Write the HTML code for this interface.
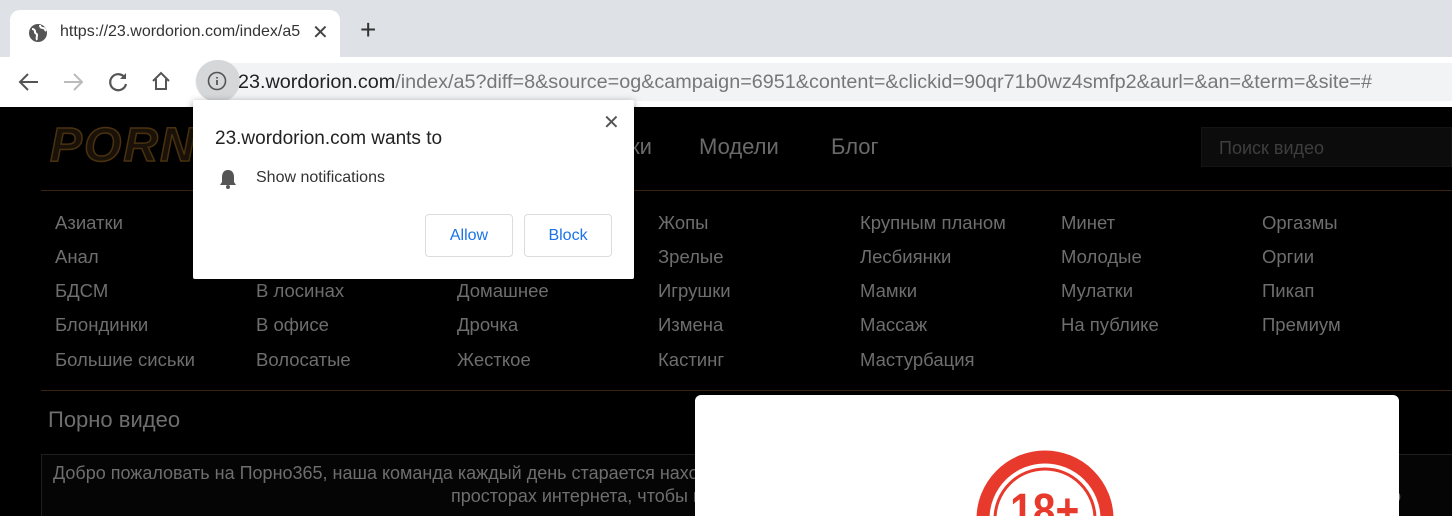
<!DOCTYPE html>
<html><head><meta charset="utf-8"><style>
*{margin:0;padding:0;box-sizing:border-box}
html,body{width:1452px;height:516px;overflow:hidden}
body{position:relative;font-family:"Liberation Sans",sans-serif;background:#000}
.tabbar{position:absolute;left:0;top:0;width:1452px;height:57px;background:#dee1e6}
.tab{position:absolute;left:10px;top:10px;width:330px;height:47px;background:#fff;border-radius:10px 10px 0 0}
.tab .t{position:absolute;left:50px;top:13px;font-size:16px;color:#333;white-space:nowrap;width:240px;overflow:hidden}
.toolbar{position:absolute;left:0;top:57px;width:1452px;height:50px;background:#fff}
.omni{position:absolute;left:195px;top:6px;width:1257px;height:38px;background:#f1f3f4;border-radius:19px 0 0 19px}
.url{position:absolute;left:238px;top:71px;font-size:19.8px;color:#777;white-space:nowrap}
.url b{font-weight:normal;color:#222}
.page{position:absolute;left:0;top:107px;width:1452px;height:409px;background:#000}
.cat{position:absolute;font-size:18.5px;color:#6e6e6e;white-space:nowrap}
.nav{position:absolute;font-size:22px;color:#6a6a6a;top:134px}
.line{position:absolute;left:41px;width:1411px;height:1px;background:#3a2414}
.popup{position:absolute;left:193px;top:100px;width:441px;height:179px;background:#fff;box-shadow:0 2px 8px rgba(0,0,0,.4);border-radius:2px}
.btn{position:absolute;top:114px;height:43px;border:1px solid #dadce0;border-radius:4px;color:#1a73e8;font-size:16px;text-align:center;line-height:41px}
</style></head><body>
<div class="tabbar">
 <div class="tab">
  <svg style="position:absolute;left:18px;top:13px" width="20" height="20" viewBox="0 0 20 20"><circle cx="10" cy="10" r="9" fill="#555"/><path d="M4 6c2 0 3 1 3 3s2 1 2 3-1 3 0 5M12 2c0 2 1 3 3 3s2 2 3 3" stroke="#fff" stroke-width="2" fill="none"/></svg>
  <div class="t">https://23.wordorion.com/index/a5</div>
  <div style="position:absolute;left:302px;top:10px;font-size:20px;color:#444">✕</div>
 </div>
 <div style="position:absolute;left:360px;top:14px;font-size:28px;color:#333">+</div>
</div>
<div class="toolbar">
 <svg style="position:absolute;left:18px;top:14px" width="22" height="22" viewBox="0 0 22 22"><path d="M20 11H3M10 3l-8 8 8 8" stroke="#555" stroke-width="2" fill="none"/></svg>
 <svg style="position:absolute;left:62px;top:14px" width="22" height="22" viewBox="0 0 22 22"><path d="M2 11h17M12 3l8 8-8 8" stroke="#bbb" stroke-width="2" fill="none"/></svg>
 <svg style="position:absolute;left:107px;top:14px" width="22" height="22" viewBox="0 0 22 22"><path d="M18 7a8 8 0 1 0 1 6" stroke="#555" stroke-width="2.2" fill="none"/><path d="M19 2v6h-6z" fill="#555"/></svg>
 <svg style="position:absolute;left:150px;top:13px" width="22" height="22" viewBox="0 0 22 22"><path d="M3 11L11 3l8 8M6 9v10h10V9" stroke="#555" stroke-width="2" fill="none"/></svg>
 <div class="omni"></div>
 <div style="position:absolute;left:196px;top:3px;width:44px;height:42px;border-radius:21px;background:#d6d7d9"></div>
 <svg style="position:absolute;left:207px;top:14px" width="20" height="20" viewBox="0 0 20 20"><circle cx="10" cy="10" r="8.5" stroke="#555" stroke-width="1.6" fill="none"/><path d="M10 9v5M10 6v1.5" stroke="#555" stroke-width="1.8"/></svg>
</div>
<div class="url"><b>23.wordorion.com</b>/index/a5?diff=8&amp;source=og&amp;campaign=6951&amp;content=&amp;clickid=90qr71b0wz4smfp2&amp;aurl=&amp;an=&amp;term=&amp;site=#</div>
<div class="page"></div>
<div style="position:absolute;left:50px;top:118px;font-size:48px;font-style:italic;font-weight:bold;color:#1a1208;-webkit-text-stroke:1.5px #4a3210;letter-spacing:2px">PORNO</div>
<div class="nav" style="left:630px">ки</div>
<div class="nav" style="left:699px">Модели</div>
<div class="nav" style="left:831px">Блог</div>
<div style="position:absolute;left:1201px;top:127px;width:251px;height:40px;background:#0c0c0c;border:1px solid #141414"><span style="position:absolute;left:17px;top:10px;font-size:18px;color:#3e3e3e">Поиск видео</span></div>
<div class="line" style="top:190px"></div>
<div class="line" style="top:390px"></div>
<div class="cat" style="left:55px;top:212px">Азиатки</div><div class="cat" style="left:55px;top:246px">Анал</div><div class="cat" style="left:55px;top:280px">БДСМ</div><div class="cat" style="left:55px;top:314px">Блондинки</div><div class="cat" style="left:55px;top:349px">Большие сиськи</div>
<div class="cat" style="left:256px;top:212px">Бразильское</div><div class="cat" style="left:256px;top:246px">Брюнетки</div><div class="cat" style="left:256px;top:280px">В лосинах</div><div class="cat" style="left:256px;top:314px">В офисе</div><div class="cat" style="left:256px;top:349px">Волосатые</div>
<div class="cat" style="left:457px;top:212px">Групповое</div><div class="cat" style="left:457px;top:246px">Девушки</div><div class="cat" style="left:457px;top:280px">Домашнее</div><div class="cat" style="left:457px;top:314px">Дрочка</div><div class="cat" style="left:457px;top:349px">Жесткое</div>
<div class="cat" style="left:658px;top:212px">Жопы</div><div class="cat" style="left:658px;top:246px">Зрелые</div><div class="cat" style="left:658px;top:280px">Игрушки</div><div class="cat" style="left:658px;top:314px">Измена</div><div class="cat" style="left:658px;top:349px">Кастинг</div>
<div class="cat" style="left:860px;top:212px">Крупным планом</div><div class="cat" style="left:860px;top:246px">Лесбиянки</div><div class="cat" style="left:860px;top:280px">Мамки</div><div class="cat" style="left:860px;top:314px">Массаж</div><div class="cat" style="left:860px;top:349px">Мастурбация</div>
<div class="cat" style="left:1061px;top:212px">Минет</div><div class="cat" style="left:1061px;top:246px">Молодые</div><div class="cat" style="left:1061px;top:280px">Мулатки</div><div class="cat" style="left:1061px;top:314px">На публике</div>
<div class="cat" style="left:1262px;top:212px">Оргазмы</div><div class="cat" style="left:1262px;top:246px">Оргии</div><div class="cat" style="left:1262px;top:280px">Пикап</div><div class="cat" style="left:1262px;top:314px">Премиум</div>
<div class="cat" style="left:48px;top:407px;font-size:22px">Порно видео</div>
<div style="position:absolute;left:41px;top:454px;width:1411px;height:62px;border:1px solid #1e1e1e;border-bottom:none;border-right:none;background:#050505"></div>
<div class="cat" style="left:53px;top:463px;font-size:18px">Добро пожаловать на Порно365, наша команда каждый день старается находить для вас лучшие порно ролики которые появляются</div>
<div class="cat" style="left:451px;top:486px;font-size:18px">просторах интернета, чтобы вы могли наслаждаться просмотром бесплатно и онлайн в хорошем качестве ии и о</div>
<div style="position:absolute;left:695px;top:395px;width:704px;height:121px;background:#fff;border-radius:6px 6px 0 0;overflow:hidden">
 <svg style="position:absolute;left:280px;top:52px" width="140" height="69" viewBox="0 0 140 69"><circle cx="70" cy="72" r="62" stroke="#e8392d" stroke-width="13" fill="none"/><circle cx="70" cy="72" r="50" stroke="#e8392d" stroke-width="3" fill="none"/><text x="70" y="80" text-anchor="middle" font-family="Liberation Sans" font-weight="bold" font-size="48" fill="#e8392d" transform="scale(0.85 1) translate(12 0)">18+</text></svg>
</div>
<div class="popup">
 <div style="position:absolute;left:22px;top:28px;font-size:19px;color:#222">23.wordorion.com wants to</div>
 <div style="position:absolute;left:410px;top:10px;font-size:20px;color:#555">✕</div>
 <svg style="position:absolute;left:26px;top:68px" width="18" height="22" viewBox="0 0 18 22"><path d="M9 2c-4 0-6 3-6 7v5l-2 3h16l-2-3V9c0-4-2-7-6-7z" fill="#555"/><circle cx="9" cy="19" r="2" fill="#555"/></svg>
 <div style="position:absolute;left:63px;top:69px;font-size:16px;color:#333">Show notifications</div>
 <div class="btn" style="left:232px;width:88px">Allow</div>
 <div class="btn" style="left:331px;width:88px">Block</div>
</div>
</body></html>
